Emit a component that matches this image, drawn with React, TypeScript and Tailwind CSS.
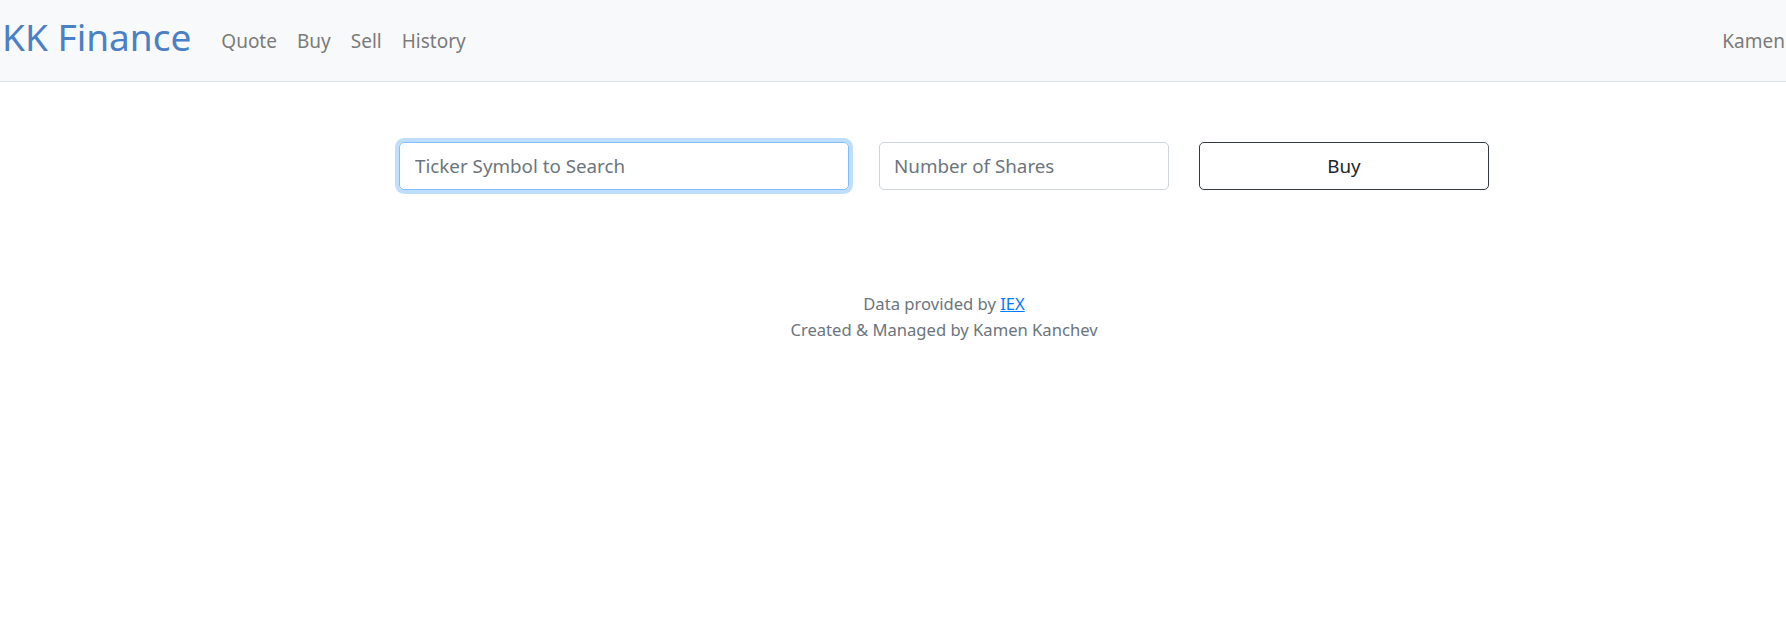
import React from "react";

export default function App() {
  return (
    <div className="min-h-[630px] bg-white font-['Noto_Sans','Open_Sans',sans-serif] text-[#212529]">
      <nav className="h-[82px] bg-[#f8f9fa] border-b border-[#dee2e6] flex items-center overflow-hidden">
        <a className="ml-[2px] text-[37px] leading-[48px] text-[#4a80c6] mb-[7px] shrink-0">KK Finance</a>
        <ul className="ml-[20px] flex items-center text-[19px] leading-[30px] text-[#7b7b7b] mt-[1px]">
          <li className="px-[10px]">Quote</li>
          <li className="px-[10px]">Buy</li>
          <li className="px-[10px]">Sell</li>
          <li className="px-[10px]">History</li>
        </ul>
        <span className="ml-auto shrink-0 text-[19px] leading-[30px] text-[#7b7b7b] mt-[1px] mr-[1px]">Kamen</span>
      </nav>
      <div className="flex pt-[60px] pl-[399px]">
        <input
          className="w-[450px] h-[48px] rounded-[5px] border border-[#80bdff] ring-4 ring-[#bfdeff] px-[15px] text-[18.8px] outline-none placeholder:text-[#6c757d]"
          placeholder="Ticker Symbol to Search"
        />
        <input
          className="ml-[30px] w-[290px] h-[48px] rounded-[5px] border border-[#ced4da] px-[14px] text-[18.8px] outline-none placeholder:text-[#6c757d]"
          placeholder="Number of Shares"
        />
        <button className="ml-[30px] w-[290px] h-[48px] rounded-[5px] border border-[#343a40] text-[18.8px] text-[#212529] bg-white">
          Buy
        </button>
      </div>
      <footer className="mt-[101px] pl-[102px] text-center text-[16.6px] leading-[26px] text-[#6c757d]">
        <div>
          Data provided by <a className="text-[#007bff] underline" href="#">IEX</a>
        </div>
        <div>Created &amp; Managed by Kamen Kanchev</div>
      </footer>
    </div>
  );
}
